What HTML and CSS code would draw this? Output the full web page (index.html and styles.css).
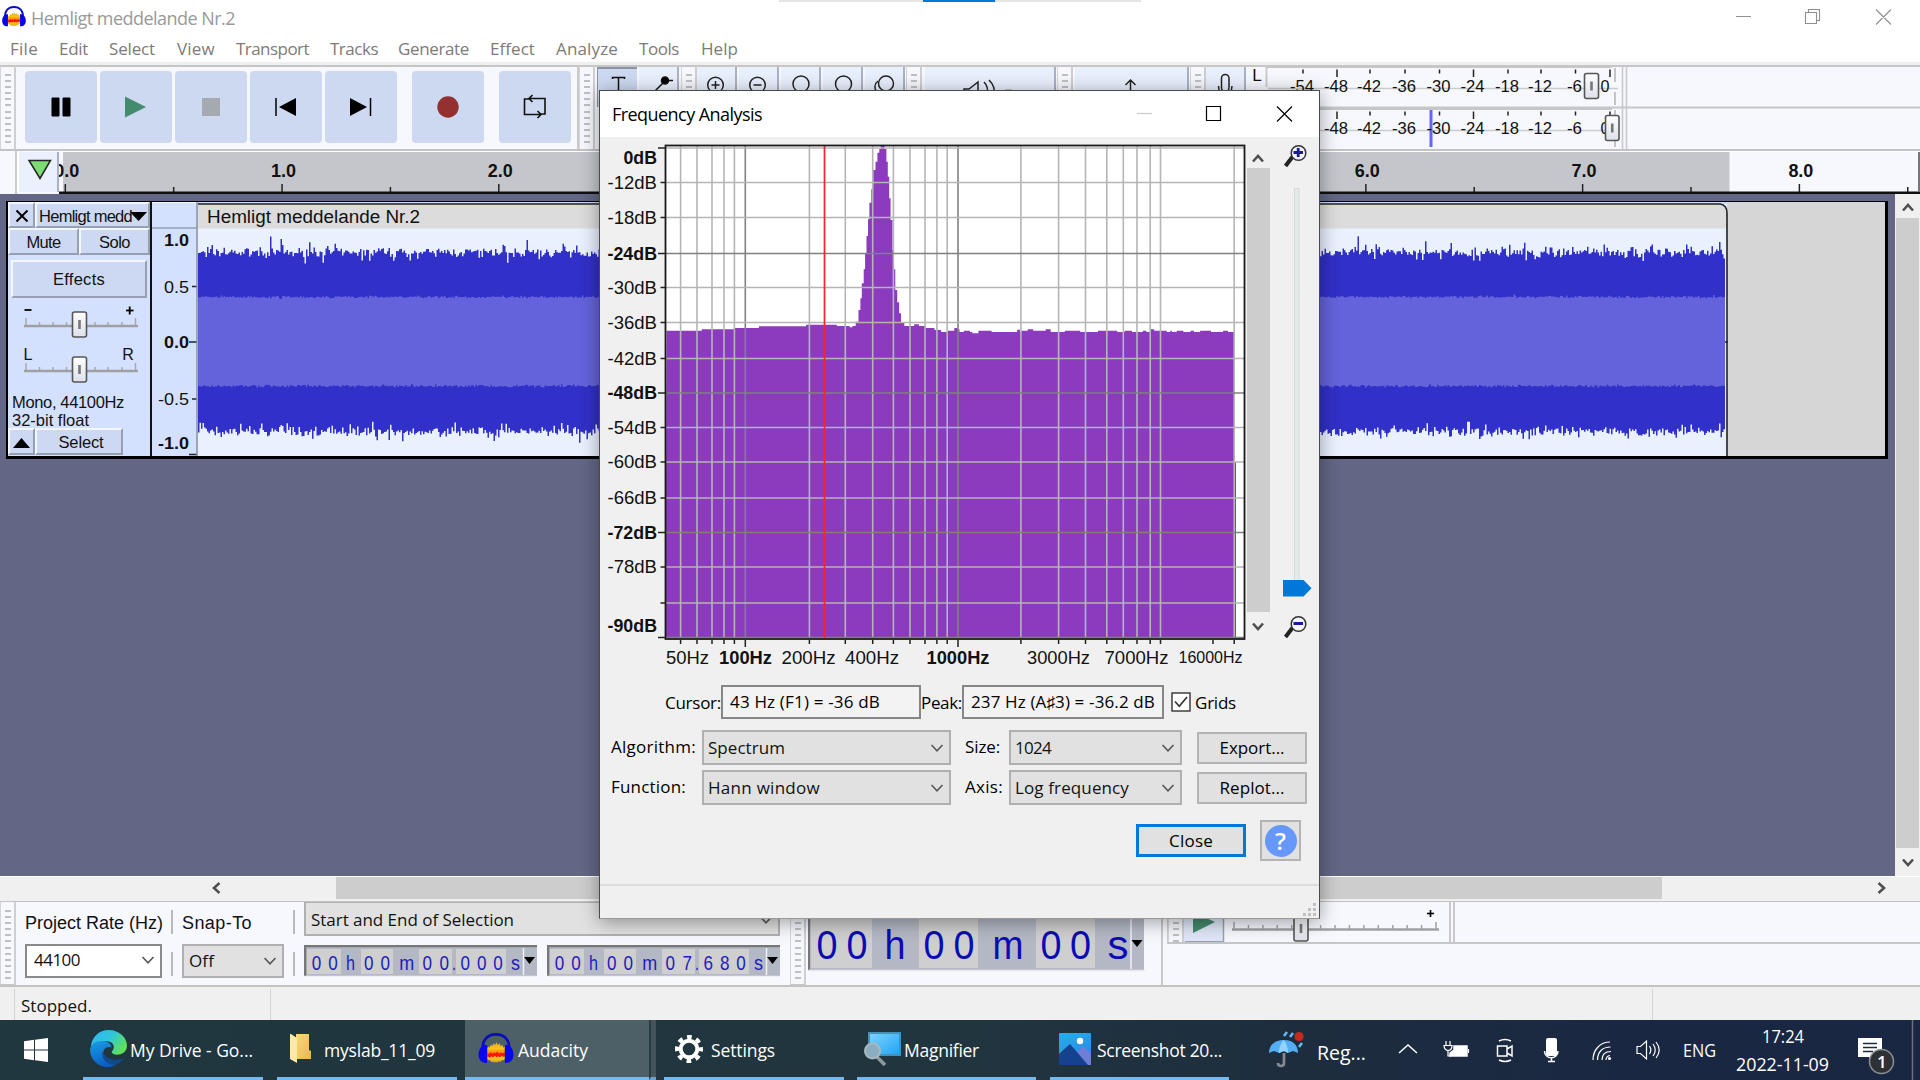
FILE: index.html
```html
<!DOCTYPE html>
<html lang="en">
<head>
<meta charset="utf-8">
<title>Hemligt meddelande Nr.2</title>
<link rel="stylesheet" href="styles.css">
</head>
<body>
<svg width="0" height="0" class="defs">
  <defs>
    <linearGradient id="thumbFill" x1="0" x2="0" y1="0" y2="1"><stop offset="0" stop-color="#fff"/><stop offset="1" stop-color="#dde0ea"/></linearGradient>
    <linearGradient id="edgeTop" x1="0" x2="1" y1="0" y2=".5"><stop offset="0" stop-color="#2fb4f0"/><stop offset=".55" stop-color="#2fc6dc"/><stop offset="1" stop-color="#5fe05c"/></linearGradient>
    <linearGradient id="edgeSide" x1="0" x2=".4" y1="0" y2="1"><stop offset="0" stop-color="#1b9de2"/><stop offset="1" stop-color="#0a5fc4"/></linearGradient>
    <linearGradient id="folder" x1="0" x2="1" y1="0" y2="1"><stop offset="0" stop-color="#f9d97b"/><stop offset="1" stop-color="#eab74f"/></linearGradient>
    <linearGradient id="screen" x1="0" x2="1" y1="0" y2="1"><stop offset="0" stop-color="#7fd4fb"/><stop offset="1" stop-color="#1fa4f6"/></linearGradient>
    <linearGradient id="photo" x1="0" x2=".4" y1="0" y2="1"><stop offset="0" stop-color="#22b0ea"/><stop offset="1" stop-color="#2f86e4"/></linearGradient>
    <linearGradient id="burst" x1="0" x2="0" y1="0" y2="1"><stop offset="0" stop-color="#d6a92a"/><stop offset=".3" stop-color="#ffc21a"/><stop offset=".5" stop-color="#ff8a0c"/><stop offset=".75" stop-color="#ffc21a"/><stop offset="1" stop-color="#cfa52c"/></linearGradient>
    <symbol id="audacity" viewBox="0 0 36 32">
      <path d="M9 27V16l1.500-2 1 1 1-3 1.500 1.500 1.500-3 1.500 2 1.500-3 1.500 3 1.500-2 1.500 3 1.500-1.500 1 3 1.500-1V27l-2 1.500-1-.500-1.500 2-1.500-1-1.500 1.800-1.500-1-1.500 1-1.500-1.500-1.500 1-2-2.500-1 .500z" fill="url(#burst)"/>
      <path d="M9 21l2 .500 1.500-2 1.500 2 2-1.500 1.500 1 2-2 1.500 2.500 2-1.500 2 1 1.500-.500 1 .500v3l-2 .500-1.500-1-2 1.500-1.500-1-2 1-1.500-1.500-2 1.500-1.500-1-2 1.500-1.500-1-1 .500z" fill="#f8160a"/>
      <path d="M4.500 17C3.500 7 9.500 1.500 18 1.500S32.500 7 31.500 17" fill="none" stroke="#0b0bc4" stroke-width="2.800"/>
      <path d="M8.800 12.500V31C3 31.500 0 27.500 0 22.500 0 17 3 12.500 7 12.500zM27.200 12.500V31c5.800.500 8.800-3.500 8.800-8.500 0-5.500-3-10-7-10z" fill="#0707ea"/>
    </symbol>
    <symbol id="chev" viewBox="0 0 14 10"><path d="M1.500 2L7 7.800 12.500 2" fill="none" stroke="#5a5a5a" stroke-width="1.700"/></symbol>
    <symbol id="arr" viewBox="0 0 12 12"><path d="M1 9.500L6 4l5 5.500" fill="none" stroke="#505050" stroke-width="2.600"/></symbol>
  </defs>
</svg>

<div class="app">
  <header class="titlebar">
    <svg class="logo" width="24" height="21"><use href="#audacity"/></svg>
    <span class="ttl" data-w="204">Hemligt meddelande Nr.2</span>
    <svg class="winbtns" width="160" height="20" viewBox="1735 7 160 20" fill="none" stroke="#8f8f8f" stroke-width="1.100">
      <path d="M1736 16.500h15M1805.500 12.500h11v11h-11zM1808.500 12V9.500h11v11h-3M1876 9.500l15 15M1891 9.500l-15 15"/>
    </svg>
    <div class="magbar"><i></i></div>
  </header>
  <nav class="menu">
    <span class="m49"><b data-w="28">File</b></span><span class="m50"><b data-w="29">Edit</b></span><span class="m68"><b data-w="46">Select</b></span><span class="m59"><b data-w="38">View</b></span><span class="m94"><b data-w="73">Transport</b></span><span class="m68"><b data-w="48">Tracks</b></span><span class="m92"><b data-w="71">Generate</b></span><span class="m66"><b data-w="45">Effect</b></span><span class="m83"><b data-w="62">Analyze</b></span><span class="m62"><b data-w="40">Tools</b></span><span><b data-w="37">Help</b></span>
  </nav>

  <section class="dock">
    <div class="grip"></div>
    <div class="transport">
      <div class="tb"><svg viewBox="0 0 72 72"><path d="M27 27h7v18h-7zM38 27h7v18h-7z" stroke="#000" stroke-width="1" stroke-linejoin="round"/></svg></div>
      <div class="tb"><svg viewBox="0 0 72 72"><path d="M25 25.500L46 36 25 46.500z" fill="#448a6c"/></svg></div>
      <div class="tb"><svg viewBox="0 0 72 72"><path d="M27 27h18v18H27z" fill="#a5a9b2"/></svg></div>
      <div class="tb"><svg viewBox="0 0 72 72"><path d="M46 27v18L29 36z"/><path d="M26 27v18" stroke="#000" stroke-width="1.500"/></svg></div>
      <div class="tb"><svg viewBox="0 0 72 72"><path d="M25 27v18l17-9z"/><path d="M45.500 27v18" stroke="#000" stroke-width="1.500"/></svg></div>
      <div class="tb rec"><svg viewBox="0 0 72 72"><circle cx="36" cy="36" r="10.700" fill="#943030"/></svg></div>
      <div class="tb loop"><svg viewBox="0 0 72 72" fill="none" stroke="#111" stroke-width="1.600"><path d="M30 28h-4.500v15.500H42M31 27.500h15V43h-4M33.500 24L30 27.500l3.500 3.500M38.500 40l3.500 3.500-3.500 3.500"/></svg></div>
    </div>
    <div class="grip g2"></div>
    <div class="cell sel"><svg width="40" height="40" viewBox="597 67 40 40" fill="none" stroke="#111" stroke-width="1.500"><path d="M612.500 79v-1.500h12V79M618.500 78v20"/></svg></div>
    <div class="cell"><svg width="40" height="40" viewBox="640 67 40 40" stroke="#111" stroke-width="1.500"><path d="M652 95l14-14M664 80.500h10"/><circle cx="666" cy="80.500" r="3.500"/></svg></div>
    <div class="grip"></div>
    <div class="cell"><svg width="40" height="40" viewBox="0 0 40 40" class="lens"><circle cx="18.500" cy="18" r="7.800"/><path d="M14.500 18h8M18.500 14v8M24 24l6 6"/></svg></div>
    <div class="cell"><svg width="40" height="40" viewBox="0 0 40 40" class="lens"><circle cx="18.500" cy="18" r="7.800"/><path d="M14.500 18h8M24 24l6 6"/></svg></div>
    <div class="cell"><svg width="40" height="40" viewBox="0 0 40 40" class="lens"><circle cx="20" cy="17" r="8"/><path d="M25 24l6 6"/></svg></div>
    <div class="cell"><svg width="40" height="40" viewBox="0 0 40 40" class="lens"><circle cx="20.500" cy="17" r="8"/><path d="M25 24l6 6"/></svg></div>
    <div class="cell"><svg width="40" height="40" viewBox="0 0 40 40" class="lens"><circle cx="21" cy="16.500" r="7.500"/><path d="M13 14c-4 3-4 8-1 11"/></svg></div>
    <div class="grip g4"></div>
    <div class="cell w131"><svg width="130" height="40" viewBox="927 67 130 40" class="lens"><path d="M966 94v-5h5l9-7v20M986 82c4 4 4 8 3 12M991 80c5 5 6 9 5 14M1007 90.500h7"/></svg></div>
    <div class="grip g4"></div>
    <div class="cell w114"><svg width="113" height="40" viewBox="1077 67 113 40" class="lens"><path d="M1132.500 96V80M1127.500 85l5-5 5 5"/></svg></div>
    <div class="grip g4"></div>
    <div class="cell"><svg width="40" height="40" viewBox="1209 67 40 40" class="lens"><rect x="1224.500" y="74.500" width="7.500" height="17" rx="3.700"/><path d="M1221.500 86c0 12 13.500 12 13.500 0"/></svg></div>
    <svg id="meters" width="378" height="86" viewBox="1250 65 378 86"></svg>
  </section>

  <section class="timeline">
    <div class="corner"></div>
    <div class="pin"><svg width="26" height="22" viewBox="0 0 26 22"><path d="M2 1.500h21.500L13 19.500z" fill="#7ddb76" stroke="#222" stroke-width="1.500"/></svg></div>
    <svg id="ruler" width="1861" height="43" viewBox="59 151 1861 43"></svg>
  </section>

  <section class="work">
    <div class="tracks">
      <div class="track">
        <div class="panel">
          <div class="prow"><span class="btn x"><svg width="14" height="14" viewBox="0 0 14 14"><path d="M1.500 1.500l11 11M12.500 1.500l-11 11" stroke="#000" stroke-width="2"/></svg></span><span class="btn name"><em data-w="93">Hemligt medd</em><svg width="17" height="9"><path d="M0 0h17L8.500 9z"/></svg></span></div>
          <div class="prow p2"><span class="btn half"><em data-w="34">Mute</em></span><span class="btn half"><em data-w="31">Solo</em></span></div>
          <div class="fx"><em data-w="52">Effects</em></div>
          <svg id="sliders" width="142" height="89" viewBox="8 301 142 89"></svg>
          <div class="info"><em data-w="112">Mono, 44100Hz</em><em data-w="77">32-bit float</em></div>
          <div class="prow p3"><span class="btn x"><svg width="17" height="10"><path d="M0 10h17L8.500 0z"/></svg></span><span class="btn selbtn"><em data-w="45">Select</em></span></div>
        </div>
        <svg id="vruler" width="46" height="254" viewBox="152 202 46 254"></svg>
        <svg id="wave" width="1689" height="254" viewBox="198 202 1689 254"></svg>
      </div>
    </div>
    <div class="vscroll"><svg width="12" height="12"><use href="#arr"/></svg><i></i><svg class="down" width="12" height="12"><use href="#arr"/></svg></div>
  </section>

  <div class="hscroll"><svg class="left" width="12" height="12"><use href="#arr"/></svg><i></i><svg class="right" width="12" height="12"><use href="#arr"/></svg></div>

  <section class="dock low">
    <div class="grip"></div>
    <div class="selbar">
      <div class="srow">
        <span class="lab w137"><em data-w="138">Project Rate (Hz)</em></span><i class="sep"></i><span class="lab w102"><em data-w="70">Snap-To</em></span><i class="sep"></i>
        <div class="combo wide"><em class="ui" data-w="203">Start and End of Selection</em><svg width="14" height="10"><use href="#chev"/></svg></div>
      </div>
      <div class="srow r2">
        <div class="combo rate"><em class="ui" data-w="46">44100</em><svg width="14" height="10"><use href="#chev"/></svg></div><i class="sep"></i><div class="combo off"><em class="ui" data-w="25">Off</em><svg width="14" height="10"><use href="#chev"/></svg></div><i class="sep"></i>
        <svg class="time" id="t1" width="233" height="32" viewBox="305 945 233 32"></svg>
        <svg class="time t2" id="t2" width="233" height="32" viewBox="305 945 233 32"></svg>
      </div>
    </div>
    <div class="grip g3"></div>
    <svg id="big" width="355" height="84" viewBox="807 902 355 84"></svg>
    <div class="rest">
      <div class="speed">
        <div class="grip"></div>
        <svg id="speed" width="265" height="41" viewBox="1185 902 265 41"></svg>
        <i class="end"></i>
      </div>
    </div>
  </section>

  <footer class="status"><span class="s1"></span><span class="s2"><em class="ui" data-w="71">Stopped.</em></span><span class="s3"></span></footer>

  <div class="dialog">
    <div class="dtitle"><span data-w="150">Frequency Analysis</span>
      <svg width="170" height="20" viewBox="1130 104 170 20" fill="none" stroke="#000" stroke-width="1.200"><path d="M1137 114.500h15" stroke="#ccc"/><path d="M1206.500 107.500h14v14h-14zM1277 107.500l15 15M1292 107.500l-15 15"/></svg>
    </div>
    <div class="dbody">
      <div class="plotrow">
        <svg id="plot" width="646" height="540" viewBox="600 137 646 540"></svg>
        <div class="dscroll"><svg width="12" height="12"><use href="#arr"/></svg><i></i><svg class="down" width="12" height="12"><use href="#arr"/></svg></div>
        <svg width="49" height="540" viewBox="1270 137 49 540">
          <path d="M1285.500 166l8-10.500" stroke="#222" stroke-width="4"/><circle cx="1298.500" cy="153" r="7.300" fill="#f4f4ff" stroke="#333" stroke-width="1.500"/><path d="M1293.500 152.500h9.500M1298.200 148v9" stroke="#1a1a99" stroke-width="2.800"/>
          <rect x="1294.500" y="188.500" width="4.500" height="392" fill="#e7eaea" stroke="#d6d9d9"/>
          <path d="M1283 580h20.500l8 8.200-8 8.300h-20.500z" fill="#0078d7"/>
          <path d="M1285.500 637l8-10.500" stroke="#222" stroke-width="4"/><circle cx="1298.500" cy="624" r="7.300" fill="#f4f4ff" stroke="#333" stroke-width="1.500"/><path d="M1293.500 623.500h9.500" stroke="#1a1a99" stroke-width="3"/>
        </svg>
      </div>
      <div class="frow f1"><em data-w="56">Cursor:</em><div class="field"><em data-w="150">43 Hz (F1) = -36 dB</em></div><em data-w="41">Peak:</em><div class="field fb"><em data-w="184">237 Hz (A♯3) = -36.2 dB</em></div><svg class="check" width="20" height="20" viewBox="0 0 20 20"><rect x="1" y="1" width="18" height="18" fill="#fff" stroke="#333" stroke-width="1.400"/><path d="M4 9.500l4.300 4.700L16 5" fill="none" stroke="#333" stroke-width="1.700"/></svg><em data-w="41">Grids</em></div>
      <div class="frow f2"><span class="l1"><em data-w="85">Algorithm:</em></span><div class="combo c1"><em data-w="77">Spectrum</em><svg width="14" height="10"><use href="#chev"/></svg></div><span class="l2"><em data-w="35">Size:</em></span><div class="combo c2"><em data-w="36">1024</em><svg width="14" height="10"><use href="#chev"/></svg></div><div class="push"><em data-w="65">Export...</em></div></div>
      <div class="frow f2 f3"><span class="l1"><em data-w="75">Function:</em></span><div class="combo c1"><em data-w="112">Hann window</em><svg width="14" height="10"><use href="#chev"/></svg></div><span class="l2"><em data-w="38">Axis:</em></span><div class="combo c2"><em data-w="114">Log frequency</em><svg width="14" height="10"><use href="#chev"/></svg></div><div class="push"><em data-w="65">Replot...</em></div></div>
      <div class="frow f4"><div class="push close"><em data-w="44">Close</em></div><div class="help"><span>?</span></div></div>
      <div class="dstatus"><svg width="14" height="14" fill="#c0c0c0"><path d="M10 0h3v3h-3zM5 5h3v3H5zM10 5h3v3h-3zM0 10h3v3H0zM5 10h3v3H5zM10 10h3v3h-3z"/></svg></div>
    </div>
  </div>
</div>

<div class="taskbar">
  <div class="start"><svg width="24" height="24" viewBox="0 0 24 24" fill="#fff"><path d="M0 3.300l10-1.500v9.700H0zM11 1.700L24 0v11.500H11zM0 12.500h10v9.700L0 20.700zM11 12.500h13V24l-13-1.800z"/></svg></div>
  <div class="task k1"><svg width="37" height="37" viewBox="0 0 36 36"><path d="M1 17C1 7 9 0 18 0c11 0 18 8 18 15 0 6-5 9-10 9-4 0-6-2-4-4 3-4 0-9-6-9C8 11 2 14 1 17z" fill="url(#edgeTop)"/><path d="M0 19c1-6 7-9 13-8 5 0 8 3 8 6-6-2-9 3-8 8s6 9 13 8c-3 2-6 3-9 3C8 36 0 29 0 19z" fill="url(#edgeSide)"/><path d="M12 21c-1 8 5 13 12 13 4-1 8-4 9-7-8 4-17 2-21-6z" fill="#114a8b"/></svg><em data-w="123">My Drive - Go...</em></div>
  <div class="task k2"><svg width="21" height="31" viewBox="0 0 21 31"><path d="M6 1h13v16l2 1v8H6z" fill="url(#folder)"/><path d="M0 1h1l6 4v25L0 26z" fill="#ffe9a3"/></svg><em data-w="111">myslab_11_09</em></div>
  <div class="task k3"><svg width="36" height="31"><use href="#audacity"/></svg><em data-w="70">Audacity</em></div>
  <i class="stack"></i>
  <div class="task k4"><svg width="28" height="28" viewBox="0 0 28 28"><circle cx="14" cy="14" r="8.300" fill="none" stroke="#fff" stroke-width="4"/><circle cx="14" cy="14" r="12" fill="none" stroke="#fff" stroke-width="4" stroke-dasharray="4.700 4.725" stroke-dashoffset="2.350"/></svg><em data-w="64">Settings</em></div>
  <div class="task k5"><svg width="37" height="34" viewBox="0 0 37 34"><path d="M5 1h31v22H5z" fill="url(#screen)" stroke="#4592b6" stroke-width="2"/><path d="M13 25l8 8" stroke="#8e989e" stroke-width="3.500"/><circle cx="8.500" cy="19" r="7.500" fill="#89aec0" stroke="#a9b7be" stroke-width="2"/></svg><em data-w="75">Magnifier</em></div>
  <div class="task k6"><svg width="32" height="32" viewBox="0 0 32 32"><rect width="32" height="32" rx="1" fill="url(#photo)"/><path d="M14 24L24 13l8 8v11H14z" fill="#6f7fd8"/><path d="M0 21L11 11l18 21H0z" fill="#15428f"/><circle cx="21" cy="8" r="3.200" fill="#fff"/></svg><em data-w="125">Screenshot 20...</em></div>
  <div class="tray">
    <svg width="660" height="60" viewBox="1260 1020 660 60" fill="none" stroke="#fff" stroke-width="1.500">
      <path d="M1269 1053c0-9 7-13 15-13s14 4 14 13l-5-2-5 2-4-2-5 2-5-2z" fill="#53aef3" stroke="none"/><path d="M1279 1053c0-6 2-10 5-13 2 3 4 7 4 13l-4-2z" fill="#93d2ff" stroke="none"/>
      <path d="M1284 1053v10c0 4-6 4-6 0" stroke="#858b91" stroke-width="2.700"/><path d="M1284 1036l3-4M1290 1037l3-4M1299 1047l3-4" stroke="#68baf8" stroke-width="2.500"/><circle cx="1299" cy="1036.500" r="4.600" fill="#c42b1c" stroke="none"/>
      <path d="M1399 1053l9-8 9 8"/>
      <path d="M1454 1046h13v10h-17v-3l4-3z" fill="#fff" stroke="#fff"/><path d="M1468.500 1049v4M1446 1041v4M1450 1041v4M1444 1045.500h8c0 4-2 5-4 5s-4-2-4-5zM1448 1051v5h3" stroke-width="1.200"/>
      <path d="M1497.500 1046h9.500v10h-9.500zM1507 1049l5-3v10l-5-3M1499 1041c4-2 8-2 12 0M1499 1060c4 2 8 2 12 0"/>
      <rect x="1546" y="1038" width="11" height="18" rx="2" fill="#fff" stroke="none"/><path d="M1544.500 1051c0 9 13.500 9 13.500 0M1551.500 1058v3.500M1548 1061.500h7"/>
      <path d="M1593 1060c0-10 7-18 17-18M1597.500 1060c0-8 5-13 13-13M1602 1060c0-5 3-8.500 9-8.500M1606 1060c0-2 1-4 4-4.500" stroke-width="1.200"/><circle cx="1609.500" cy="1058.500" r="1.600" fill="#fff" stroke="none"/>
      <path d="M1637 1046.500h3.500l6-5.500v18l-6-5.500h-3.500zM1649.500 1046c2 3 2 5 0 8M1653 1044c3 4 3 8 0 12M1656 1042c4 5 4 11 0 16" stroke-width="1.200"/>
      <path d="M1858 1038h24v19h-8l-5 4v-4h-11z" fill="#fff" stroke="none"/><path d="M1863 1043.500h14M1863 1047.500h14M1863 1051.500h10" stroke="#1c2a41"/>
      <circle cx="1881.500" cy="1061.500" r="12" fill="#2d3136" stroke="#8b8f95"/>
      <path d="M1912.500 1020v60" stroke="#69707e"/>
      <g class="trayt"><text x="1317" y="1060" font-size="20" textLength="49" lengthAdjust="spacingAndGlyphs">Reg...</text><text x="1683" y="1057" textLength="33" lengthAdjust="spacingAndGlyphs">ENG</text><text x="1762" y="1043" textLength="42" lengthAdjust="spacingAndGlyphs">17:24</text><text x="1736" y="1071" textLength="93" lengthAdjust="spacingAndGlyphs">2022-11-09</text><text x="1877" y="1068" font-size="17" font-weight="600">1</text></g>
    </svg>
  </div>
</div>
<script src="app.js"></script>
</body>
</html>
```
FILE: styles.css
```css
* { box-sizing: border-box; }
body { margin: 0; width: 1920px; height: 1080px; overflow: hidden; font-family: "Open Sans", "Noto Sans", sans-serif; background: #fff; }
em, b, i { font-style: normal; font-weight: inherit; }
svg { display: block; flex: none; }
em, [data-w] { white-space: nowrap; }
.defs { position: absolute; }

.app { height: 1020px; display: flex; flex-direction: column; position: relative; }
.titlebar { height: 38px; display: flex; align-items: center; position: relative; flex: none; }
.logo { margin: -6px 6px 0 2px; }
.ttl { font-size: 18px; color: #999; margin-top: -2px; margin-left: -1px; }
.winbtns { margin-left: auto; margin-right: 25px; margin-top: -4px; }
.magbar { position: absolute; left: 779px; top: 0; width: 362px; height: 2px; background: #e5e5e5; }
.magbar i { display: block; width: 72px; height: 2px; margin-left: 144px; background: #0078d7; }

.menu { height: 24px; flex: none; display: flex; align-items: center; padding: 0 0 3px 10px; font-size: 17px; line-height: 21px; color: #7d7a78; }
.menu span { display: block; }
.m49 { width: 49px; } .m50 { width: 50px; } .m68 { width: 68px; } .m59 { width: 59px; } .m94 { width: 94px; }
.m92 { width: 92px; } .m66 { width: 66px; } .m83 { width: 83px; } .m62 { width: 62px; }

.dock { height: 89px; flex: none; display: flex; background: #f7f8fe; border-top: 3px solid #efefef; border-bottom: 2px solid #c3c3c3; box-shadow: inset 0 2px #c6c6c6; padding-top: 1px; }
.grip { width: 16px; flex: none; border-right: 2px solid #cfcfd2; border-left: 1px solid #d5d5d8; padding: 8px 3px 0 4px; }
.grip::before { content: ""; display: block; height: 70px; max-height: 100%; background: repeating-linear-gradient(#bfc0c4 0 2px, transparent 2px 6.100px); }
.transport { display: flex; gap: 3px; padding: 5px 5px 0 9px; border-right: 2px solid #c9c9cc; width: 563px; }
.tb { width: 72px; height: 72px; background: #cdd8f1; border-radius: 4px; flex: none; }
.rec { margin-left: 12px; } .loop { margin-left: 12px; }
.g2 { margin-right: 2px; }
.g4 { margin-left: -1px; }
.cell { width: 40px; height: 40px; margin: 1px 2px 0 0; background: #e9f0fd; border-right: 2px solid #a9b1c4; flex: none; overflow: hidden; }
.sel { background: #cdd9f0; border-top: 2px solid #8a93a8; border-left: 1px solid #8a93a8; border-right: 0; }
.sel svg { margin: -2px 0 0 -1px; }
.lens { fill: none; stroke: #222; stroke-width: 1.500; }
.w131 { width: 131px; margin-left: 3px; } .w114 { width: 114px; margin-left: 2px; }
#meters { position: absolute; left: 1250px; top: 65px; }

.timeline { height: 43px; flex: none; display: flex; background: #f7f8fe; }
.corner { width: 17px; border-right: 2px solid #ccc; }
.pin { width: 42px; height: 40px; margin-top: 1px; background: #eaf0fe; border-right: 2px solid #a9b1c4; border-left: 2px solid #fff; padding: 7px 0 0 8px; }

.work { flex: none; height: 682px; display: flex; background: #636785; }
.tracks { width: 1895px; padding: 7px 0 0 6px; }
.track { width: 1882px; height: 258px; display: flex; border: solid #000; border-width: 1px 3px 3px 2px; overflow: hidden; }
.panel { width: 144px; border-right: 2px solid #111; background: #d4e1fe; font-family: "Liberation Sans", Arial, sans-serif; font-size: 16.500px; color: #111; flex: none; }
.prow { display: flex; height: 26px; }
.btn { display: flex; align-items: center; justify-content: center; background: #cdd9f2; border: 2px solid; border-color: #f2f6ff #97a0b2 #97a0b2 #f2f6ff; padding-top: 2px; }
.x { width: 27px; } .name { width: 115px; padding-left: 2px; justify-content: flex-start; }
.name svg { margin-left: -2px; }
.half { width: 71px; }
.p2 { height: 27px; }
.fx { margin: 5px 3px 3px 3px; height: 38px; display: flex; align-items: center; justify-content: center; background: #cdd9f2; border: 2px solid; border-color: #f2f6ff #97a0b2 #97a0b2 #f2f6ff; padding-top: 1px; }
.info { display: flex; flex-direction: column; line-height: 18px; padding: 3px 0 0 4px; height: 38px; }
.info em { align-self: flex-start; }
.p3 { height: 27px; } .selbtn { width: 88px; padding-left: 4px; }

.vscroll { width: 25px; background: #f0f0f0; padding: 7px 0 0 0; display: flex; flex-direction: column; align-items: center; }
.vscroll i { width: 23px; height: 630px; background: #cdcdcd; margin: 5px 0 9px; }
.down { transform: rotate(180deg); }
.hscroll { height: 25px; flex: none; background: #f0f0f0; border-top: 1px solid #fff; display: flex; align-items: center; padding: 0 0 2px 210px; }
.hscroll i { width: 1326px; height: 22px; background: #cdcdcd; margin: 0 214px 0 114px; }
.left { transform: rotate(-90deg); } .right { transform: rotate(90deg); }

.low { height: 86px; border-top: 1px solid #c3c3c3; padding-top: 0; box-shadow: none; }
.low > .grip { border-bottom: 1px solid #c6c6c6; }
.selbar { width: 774px; padding: 0 10px 0 9px; display: flex; flex-direction: column; gap: 8px; font-family: "Liberation Sans", Arial, sans-serif; font-size: 18px; color: #111; }
.srow { display: flex; height: 34px; align-items: center; flex: none; }
.lab { padding-top: 8px; flex: none; } .w137 { width: 137px; } .w102 { width: 102px; }
.sep { width: 2px; height: 24px; background: #b9b9bd; margin: 5px 9px 0 9px; flex: none; }
.ui { font-family: "Open Sans", "Noto Sans", sans-serif; font-size: 17px; }
.combo { height: 34px; flex: none; display: flex; align-items: center; justify-content: space-between; background: #e1e1e1; border: 2px solid #b0b0b0; padding: 0 5px 0 5px; font-size: 17px; color: #111; }
.combo em { line-height: 24px; }
.wide { width: 476px; border-width: 1px 2px 2px 2px; padding-top: 2px; }
.rate { width: 137px; background: #fff; border-color: #8a8a8a; padding-left: 7px; padding-bottom: 2px; }
.off { width: 102px; }
.t2 { margin-left: 10px; }
.time { margin-top: -1px; }
.rest { flex: 1; display: flex; flex-direction: column; border-left: 2px solid #c9c9cc; padding-left: 4px; }
.speed { height: 42px; display: flex; border-bottom: 2px solid #c6c6c6; border-left: 1px solid #ccc; overflow: hidden; flex: none; }
.end { width: 6px; border: solid #c9c9cc; border-width: 0 2px 0 2px; }
.status { flex: none; height: 33px; background: #f0f0f0; display: flex; align-items: center; padding: 2px 0 0 0; color: #111; }
.status span { height: 31px; border-right: 1px solid #d4d4d4; display: flex; align-items: center; }
.s1 { width: 15px; } .s2 { width: 256px; padding: 2px 0 0 6px; } .s3 { width: 1382px; }

.dialog { position: absolute; left: 599px; top: 90px; width: 721px; height: 829px; border: 1px solid #4a4a4a; border-bottom-color: #999; background: #f0f0f0; box-shadow: 0 3px 18px rgba(0,0,0,.38); color: #000; }
.dtitle { height: 46px; background: #fff; display: flex; align-items: center; padding: 0 19px 0 12px; font-size: 18px; justify-content: space-between; }
.dtitle svg { margin-top: -2px; }
.plotrow { display: flex; height: 540px; }
.dscroll { width: 24px; padding-top: 15px; display: flex; flex-direction: column; align-items: center; }
.dscroll i { width: 23px; height: 444px; margin: 4px 0 9px; background: #cdcdcd; }
.frow { display: flex; align-items: center; font-size: 17px; line-height: 23px; }
.f1 { margin-top: 8px; height: 34px; padding-left: 65px; }
.field { width: 200px; height: 34px; border: 2px solid #868686; display: flex; align-items: center; padding-left: 7px; padding-bottom: 2px; background: #f3f3f3; flex: none; }
.fb { width: 202px; }
.check { margin: 0 4px 0 7px; }
.f2 { margin-top: 11px; height: 35px; padding-left: 11px; }
.f3 { margin-top: 5px; }
.l1 { width: 91px; padding-bottom: 3px; flex: none; } .l2 { width: 58px; padding: 0 0 3px 14px; flex: none; }
.f2 .combo { height: 35px; padding-left: 4px; } .c1 { width: 249px; } .c2 { width: 173px; }
.push { width: 110px; height: 32px; background: #e1e1e1; border: 2px solid #b4b4b4; display: flex; align-items: center; justify-content: center; margin-left: 15px; flex: none; }
.f4 { margin-top: 15px; height: 41px; padding-left: 536px; }
.close { margin-left: 0; height: 33px; border: 3px solid #0078d7; }
.help { width: 41px; height: 41px; margin-left: 14px; border: 2px solid #b4b4b4; background: #e1e1e1; display: flex; align-items: center; justify-content: center; }
.help span { width: 32px; height: 32px; border-radius: 50%; background: #6698fb; color: #fff; font-size: 24px; line-height: 31px; text-align: center; font-weight: 600; }
.dstatus { margin-top: 23px; height: 34px; border-top: 2px solid #dcdcdc; display: flex; justify-content: flex-end; align-items: flex-end; padding: 0 2px 1px 0; }

.taskbar { height: 60px; display: flex; background: linear-gradient(90deg, #20373f, #21353f 50%, #1d2d3e 68%, #1a2742 85%); color: #fff; font-size: 17.500px; }
.start { width: 83px; padding: 18px 0 0 24px; }
.task { border-bottom: 3px solid #76b9ed; height: 60px; display: flex; align-items: center; flex: none; }
.task em { padding-top: 3px; }
.k1 { width: 180px; padding-left: 7px; gap: 3px; }
.k2 { width: 180px; margin-left: 14px; padding-left: 13px; gap: 13px; }
.k3 { width: 184px; margin-left: 8px; padding-left: 13px; gap: 4px; background: #4d6067; }
.stack { width: 7px; background: #45545b; border-left: 2px solid #2b3c43; border-bottom: 3px solid #69a3cf; }
.k4 { width: 180px; margin-left: 8px; padding-left: 11px; gap: 8px; }
.k5 { width: 179px; margin-left: 13px; padding-left: 7px; gap: 3px; }
.k6 { width: 179px; margin-left: 14px; padding-left: 9px; gap: 6px; }
.tray { margin-left: auto; width: 660px; }
.trayt { fill: #fff; stroke: none; font-size: 17.500px; }

.ar { font-family: "Liberation Sans", Arial, sans-serif; font-size: 17px; fill: #111; }
#ruler .ar, #plot .ar { font-size: 18px; }
.bd { font-weight: bold; }
```
FILE: app.js
```js
const $ = id => document.getElementById(id);
const T = (x, y, s, w, cls = '', anchor = 'middle', extra = '') =>
  `<text class="ar ${cls}" x="${x}" y="${y}" text-anchor="${anchor}" ${w ? `textLength="${w}" lengthAdjust="spacingAndGlyphs"` : ''} ${extra}>${s}</text>`;
const L = (x1, y1, x2, y2, c = '#222', w = 1.5) =>
  `<path d="M${x1} ${y1}L${x2} ${y2}" stroke="${c}" stroke-width="${w}" fill="none"/>`;
const thumb = (x, y, w = 14, h = 25) =>
  `<rect x="${x}" y="${y}" width="${w}" height="${h}" rx="2" fill="url(#thumbFill)" stroke="#555" stroke-width="1.6"/><rect x="${x + w / 2 - 1.3}" y="${y + 8}" width="2.6" height="9" fill="#777"/>`;
let seed = 7;
const rnd = () => (seed = (seed * 16807) % 2147483647) / 2147483647;

// Level meters
(() => {
  let s = L(1250, 107.5, 1920, 107.5, '#c6c6c6', 2) + T(1257, 81, 'L', 0, '', 'middle');
  const xs = [1303, 1337, 1370, 1405, 1439.5, 1473.5, 1508, 1541, 1575.5, 1610];
  [0, 42].forEach(o => {
    s += L(1266.5, 66 + o, 1266.5, 87 + o, '#ccc', 2) + L(1266, 67 + o, 1612, 67 + o, '#c6c6c6', 2) + L(1268, 88.5 + o, 1618, 88.5 + o, '#ccc', 1.6);
    if (o) s += L(1431, 110, 1431, 147, '#6464f8', 3);
    xs.forEach((x, i) => {
      s += L(x, 69.5 + o, x, (i % 4 === 1 || i === 9 ? 77 : 73.500) + o);
      const v = -54 + i * 6;
      s += T(i === 9 ? 1605 : x - 1, 92 + o, v, v === 0 ? 9 : v === -6 ? 15 : 24);
    });
    s += L(1615, 68 + o, 1615, 82 + o, '#c4c4c4', 2) + L(1615, 92 + o, 1615, 105 + o, '#c4c4c4', 2);
  });
  s += thumb(1584.5, 73.5) + thumb(1605.5, 115.5, 13.5);
  s += L(1622.5, 66, 1622.5, 149, '#c9c9cc', 1.6) + L(1626.5, 66, 1626.5, 149, '#c9c9cc', 1.6);
  $('meters').setAttribute('width', 670);
  $('meters').setAttribute('viewBox', '1250 65 670 86');
  $('meters').innerHTML = s;
})();

// Timeline ruler
(() => {
  let s = '<rect x="63" y="152" width="1666.500" height="40" fill="#c5c6cc"/>' + L(59, 151.5, 1920, 151.5, '#fff', 1);
  for (let i = 0; i < 18; i++) {
    const x = 65.3 + i * 108.38;
    s += L(x, i % 2 ? 187 : 184, x, 192);
    if (i % 2 === 0) s += T(x + 1.5, 177, (i / 2).toFixed(1), 25, 'bd');
  }
  s += '<rect x="59" y="191.500" width="1861" height="2.500" fill="#101010"/>' + L(1919, 152, 1919, 192, '#777', 2);
  $('ruler').innerHTML = s;
})();

// Gain and pan sliders
(() => {
  let s = '';
  [[326, '−', '+', 309], [371, 'L', 'R', 354]].forEach(([y, a, b, ty]) => {
    [26, 39.5, 53, 66.5, 80, 95, 108, 122, 135.5].forEach((x, i) => s += L(x, y - (i % 8 ? 4 : 8), x, y, '#a8a8ad'));
    s += L(24, y, 138, y, '#a0a0a4', 2.5) + thumb(72.5, y - 14);
    if (a === 'L') s += T(28, ty + 6, a, 0, '', 'middle', 'style="font-size:16px"') + T(128, ty + 6, b, 0, '', 'middle', 'style="font-size:16px"');
    else s += L(24.5, 310, 31.5, 310, '#000', 1.8) + L(126, 310.500, 133.5, 310.500, '#000', 1.8) + L(129.7, 306.500, 129.7, 314.500, '#000', 1.8);
  });
  $('sliders').innerHTML = s;
})();

// Amplitude scale
(() => {
  let s = '<rect x="152" y="202" width="46" height="254" fill="#d4e1fe"/>' + L(152, 228, 197, 228, '#97a0b2', 1.5) + L(152, 202.500, 198, 202.500, '#f2f6ff', 1);
  [['1.0', 246, 1], ['0.5', 293, 0], ['0.0', 348, 1], ['-0.5', 405, 0], ['-1.0', 449, 1]].forEach(([t, y, b]) => s += T(189, y, t, t.length > 3 ? 31 : 25, b ? 'bd' : '', 'end'));
  s += L(192, 286.5, 197, 286.5) + L(189, 342, 197, 342) + L(192, 399, 197, 399) + L(189, 454.5, 197, 454.5) + L(197, 202, 197, 456, '#8a90a0', 1.5);
  $('vruler').innerHTML = s;
})();

// Waveform clip
(() => {
  const amp = (base, dir, spread, spike) => {
    const p = [];
    for (let x = 198; x < 1725; x += 1.5) {
      let v = (rnd() + rnd()) / 2 * spread;
      const r = rnd();
      if (r > .99) v += spike; else if (r > .9) v += spike * .4; else if (r < .06) v -= spike * .55;
      const y = (base - dir * v).toFixed(1);
      p.push(`${x.toFixed(1)} ${y}`, `${(x + 1.5).toFixed(1)} ${y}`);
    }
    return p;
  };
  const band = (t, b, spread, spike, c) => `<path d="M${amp(t, 1, spread, spike).join('L')}L${amp(b, -1, spread, spike).reverse().join('L')}Z" fill="${c}"/>`;
  $('wave').innerHTML =
    '<rect x="198" y="202" width="1690" height="254" fill="#d6d6d6"/><rect x="198" y="202" width="1529" height="254" fill="#e9f0fe"/><rect x="198" y="202" width="1529" height="2" fill="#c9daf9"/>' +
    '<path d="M198 204.500H1721Q1727 205 1727 212V228.500H198z" fill="#dcdcdc"/>' +
    band(258, 426, 11, 12, '#3130c8') + band(298.5, 384.5, 3, 1.5, '#6463db') +
    '<path d="M198 204H1720Q1727 205 1727 213V456" fill="none" stroke="#222" stroke-width="1.600"/>' + L(1725, 342, 1728, 342) +
    T(207, 222.5, 'Hemligt meddelande Nr.2', 213, '', 'start', 'style="font-size:18px"');
})();

// Spectrum plot
(() => {
  const P = (x, y) => `${(590 + x / 2.119).toFixed(1)} ${(130 + y / 3).toFixed(1)}`;
  const pts = [[162,602],[237,598],[305,594],[358,589],[458,584],[523,588],[550,592],[556,588],[563,575],[569,540],[573,505],[576,460],[580,418],[583,370],[586,318],[589,268],[592,218],[596,178],[600,120],[605,95],[609,68],[613,57],[616,48],[622,48],[624,57],[628,95],[631,140],[634,205],[637,270],[641,360],[643,418],[647,480],[651,517],[655,550],[659,577],[666,588],[684,588],[687,583],[697,588],[712,594],[730,600],[744,606],[757,602],[772,594],[778,598],[783,606],[792,602],[805,606],[810,610],[823,602],[851,606],[905,599],[911,606]];
  let d = 'M665.5 638L' + P(162, 602);
  for (let i = 1; i < pts.length; i++) d += 'L' + P(pts[i][0], pts[i - 1][1]) + 'L' + P(...pts[i]);
  let x = 911;
  while (x < 1355) {
    const y = rnd() > .45 ? 606 : rnd() > .1 ? 602 : 598, n = Math.min(1363, x + 3 + rnd() * (x > 1200 ? 5 : 14));
    d += 'L' + P(x, y) + 'L' + P(n, y); x = n;
  }
  d += 'L1234 332V462H1236V638Z';
  const dark = '#808080', lt = '#b5b5b5';
  const hy = [148, 182.5, 217.5, 253.5, 287.5, 322.5, 358.5, 393, 427.5, 462, 498, 532.5, 567, 603, 637.5];
  const vx = [680.6, 697, 712, 724, 734.4, 745.3, 809.4, 845.3, 872.7, 893.4, 910, 925, 936.9, 947.2, 958, 1020.9, 1058.6, 1085.5, 1106.8, 1123.3, 1137, 1150.2, 1160.5, 1234.2];
  let s = `<rect x="665.5" y="145.500" width="579" height="493" fill="#fff"/><path d="${d}" fill="#8c3bbe"/>`;
  const lbl = ['0', '-12', '-18', '-24', '-30', '-36', '-42', '-48', '-54', '-60', '-66', '-72', '-78', '', '-90'];
  vx.forEach(v => { s += L(v, 146, v, 638, v === 745.3 || v === 958 ? dark : lt, 1.6) + L(v, 640, v, v === 745.3 || v === 958 ? 647 : 644); });
  s += L(1213, 640, 1213, 644);
  hy.forEach((y, i) => {
    const b = [0, 3, 7, 11, 14].includes(i);
    s += L(666, y, 1244, y, b && i ? dark : lt, 1.7) + L(b ? 658 : 660.5, y, 666, y);
    const ty = i === 0 ? 163.5 : i === 14 ? 632 : y + 6.3;
    if (lbl[i]) s += T(657, ty, lbl[i] + 'dB', i ? 49.5 : 33.5, b ? 'bd' : '', 'end');
  });
  s += L(824.5, 146, 824.5, 638, '#f3242a', 1.7);
  s += '<rect x="665.5" y="145.500" width="579" height="493.500" fill="none" stroke="#1a1a1a" stroke-width="1.800"/>';
  [['50Hz', 687.5, 43], ['100Hz', 745.5, 53, 1], ['200Hz', 808.5, 54], ['400Hz', 872, 54], ['1000Hz', 958, 63, 1], ['3000Hz', 1058.5, 63], ['7000Hz', 1136.5, 64], ['16000Hz', 1210.5, 64]].forEach(([t, cx, w, b], i) => s += T(cx, i === 7 ? 662.5 : 663.5, t, w, b ? 'bd' : '', 'middle', i === 7 ? 'style="font-size:16px"' : ''));
  $('plot').innerHTML = s;
})();

// Time fields
const timeField = (id, text) => {
  const xs = [317.5, 334, 351.5, 369.7, 386.3, 407.7, 428.2, 445.2, 455, 466.2, 482.8, 499, 516.4];
  let s = '<rect x="305" y="945" width="233" height="32" fill="#b3b8c4"/>';
  [[308, 34], [362, 32], [420, 33], [457, 50]].forEach(([x, w]) => s += `<rect x="${x}" y="949" width="${w}" height="25" fill="#cfcfcf"/>`);
  s += L(305, 946, 538, 946, '#777', 2.5) + L(306, 945, 306, 977, '#777', 2.5) + L(305, 976.5, 538, 976.5, '#eee', 1.5);
  [...text].forEach((c, i) => {
    const w = c === 'm' ? 15 : c === '.' ? 4 : c === 's' || c === 'h' ? 9 : 9.5;
    s += T(xs[i], 970, c, w, '', 'middle', 'style="font-size:20.5px;fill:#1d1dbd"');
  });
  $(id).innerHTML = s + L(524.5, 948, 524.5, 975, '#f1f3fa', 1.5) + '<path d="M525 957h11l-5.500 7z"/>';
};
timeField('t1', '00h00m00.000s');
timeField('t2', '00h00m07.680s');

// Playback position
(() => {
  let s = '<rect x="809" y="903" width="336" height="67" fill="#b3b8c4"/>';
  [[812, 61], [920, 59], [1037, 59]].forEach(([x, w]) => s += `<rect x="${x}" y="905" width="${w}" height="63" fill="#cfcfcf"/>`);
  s += L(810, 903, 810, 970, '#777', 2);
  [['0', 828], ['0', 858], ['h', 896], ['0', 935], ['0', 965], ['m', 1009], ['0', 1052], ['0', 1081.5], ['s', 1119]].forEach(([c, x]) => s += T(x, 959, c, c === 'm' ? 31 : 21, '', 'middle', 'style="font-size:41px;fill:#0c0cb4"'));
  $('big').innerHTML = s + L(1132, 905, 1132, 969, '#f1f3fa') + L(809, 970.5, 1146, 970.5, '#e8e8e8', 1.5) + '<path d="M1132.500 940h11l-5.500 7z"/>';
})();

// Playback speed
(() => {
  let s = '<rect x="1185" y="903" width="39" height="39" fill="#dfe7f8"/>' + L(1224.5, 903, 1224.5, 942, '#97a0b2') + L(1186, 941.8, 1225, 941.8, '#97a0b2') + '<path d="M1194 912v21l22-11z" fill="#448a6c"/>';
  for (let i = 0; i < 15; i++) { const x = 1235 + i * 14.43; s += L(x, i % 14 ? 925 : 922, x, 929, '#a0a0a4'); }
  s += L(1233, 929.5, 1440, 929.5, '#a0a0a4', 2.6) + thumb(1295, 916) + L(1428, 913.5, 1435, 913.5, '#000', 1.6) + L(1431.5, 910, 1431.5, 917, '#000', 1.6);
  $('speed').innerHTML = s;
})();

document.querySelectorAll('[data-w]').forEach(e => {
  e.style.display = 'inline-block';
  const n = e.textContent.length, w = e.getBoundingClientRect().width;
  e.style.letterSpacing = ((+e.dataset.w - w) / n).toFixed(3) + 'px';
});
```
